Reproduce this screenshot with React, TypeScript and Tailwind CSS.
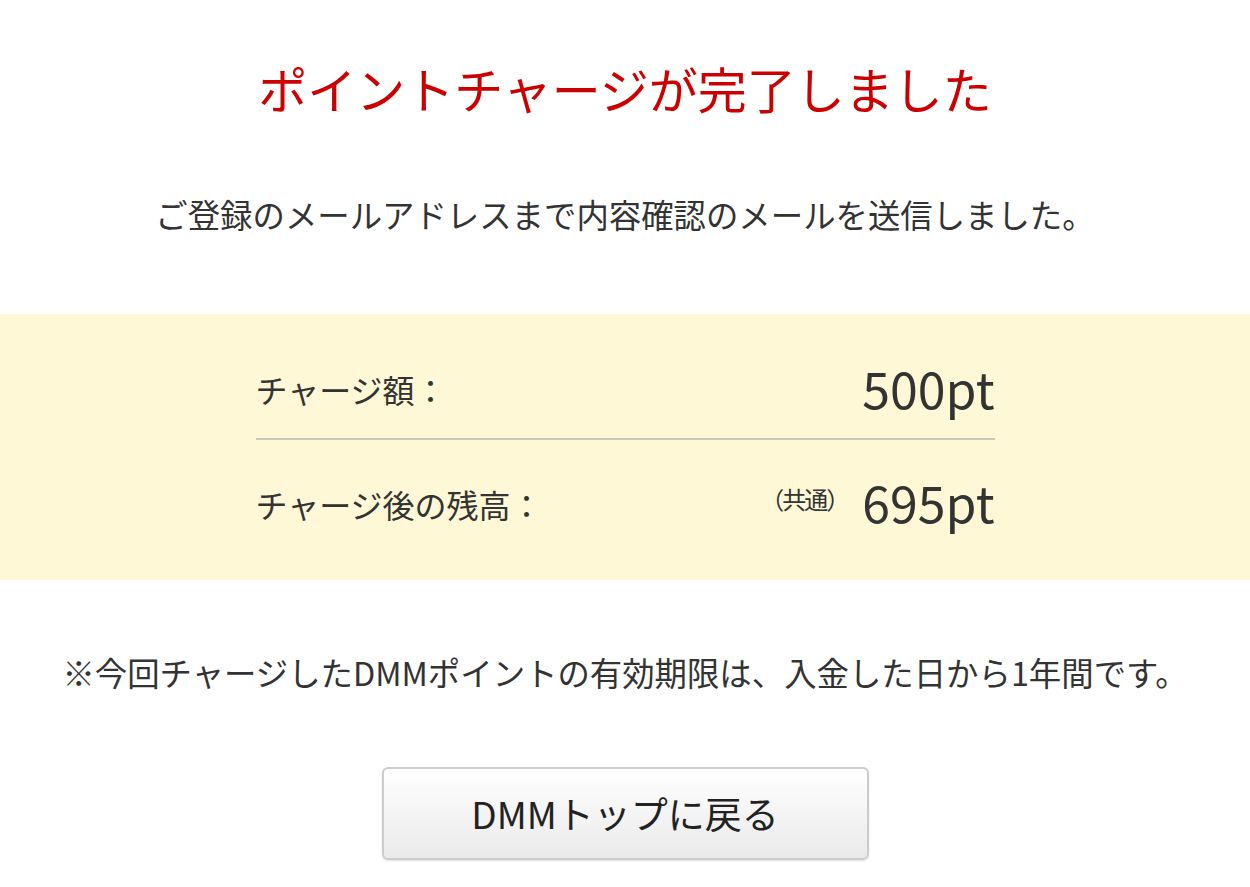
const jp = "font-['Noto_Sans_CJK_JP','Noto_Sans',sans-serif]";

export default function App() {
  return (
    <div className={`${jp} min-h-[887px] w-full bg-white text-[#333]`}>
      <h1 className="pt-[58px] text-center text-[49px] leading-[60px] font-normal text-[#cc0000]">
        ポイントチャージが完了しました
      </h1>

      <p className="mt-[74px] text-center text-[32.4px] leading-[44px]">
        ご登録のメールアドレスまで内容確認のメールを送信しました。
      </p>

      <div className="mt-[78px] h-[266px] bg-[#fff8d6] pt-[32px]">
        <div className="mx-auto w-[739px]">
          <div className="flex h-[92px] items-center justify-between pb-[10px]">
            <span className="pt-[4px] text-[32px] leading-[40px]">チャージ額：</span>
            <span className="text-[50px] leading-[56px]">500pt</span>
          </div>
          <div className="h-[2px] bg-[#c8c8c0]" />
          <div className="flex h-[132px] items-center justify-between pb-[10px]">
            <span className="pt-[6px] text-[32px] leading-[40px]">チャージ後の残高：</span>
            <span className="flex items-start gap-[14px]">
              <span className="pt-[11px] text-[24px] leading-[30px] tracking-[-2px]">（共通）</span>
              <span className="text-[50px] leading-[56px]">695pt</span>
            </span>
          </div>
        </div>
      </div>

      <p className="mt-[70px] text-center text-[32.4px] leading-[44px]">
        ※今回チャージしたDMMポイントの有効期限は、入金した日から1年間です。
      </p>

      <div className="mt-[73px] flex justify-center">
        <button className="flex h-[93px] w-[487px] items-center justify-center rounded-[6px] border-2 border-[#cccccc] bg-gradient-to-b from-white to-[#eaeaea] text-[37px] text-[#222] shadow-[0_1px_2px_rgba(0,0,0,0.12)]">
          DMMトップに戻る
        </button>
      </div>
    </div>
  );
}
